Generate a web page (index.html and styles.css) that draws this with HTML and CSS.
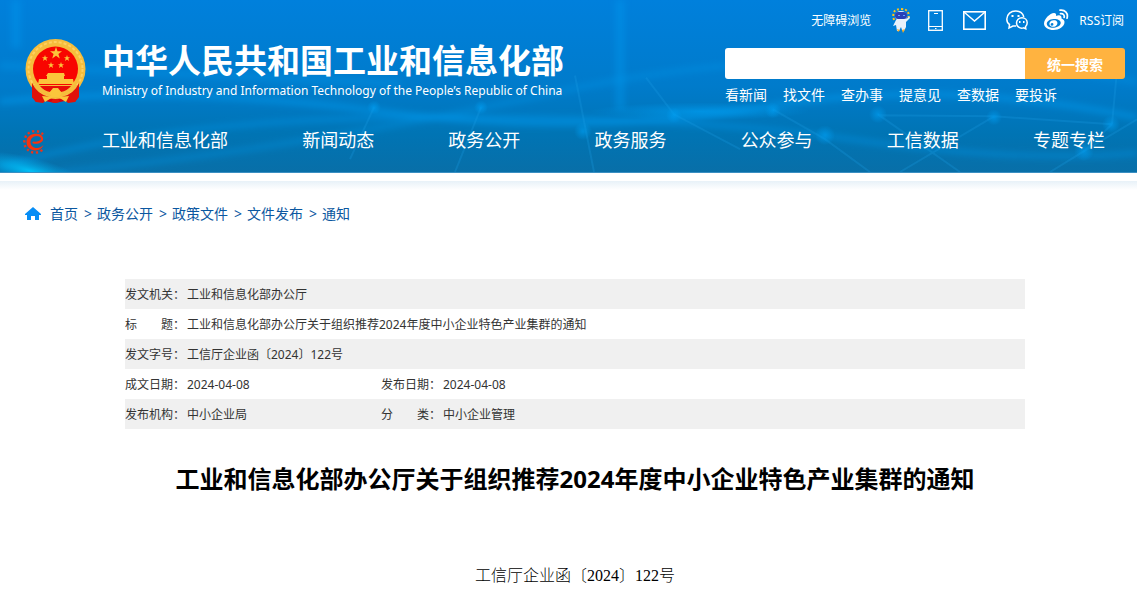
FILE: index.html
```html
<!DOCTYPE html>
<html lang="zh-CN">
<head>
    <meta charset="UTF-8">
    <meta name="viewport" content="width=device-width, initial-scale=1.0">
    <title>工业和信息化部办公厅关于组织推荐2024年度中小企业特色产业集群的通知</title>
    <link rel="stylesheet" href="styles.css">
</head>
<body>
    <header class="header">
        <svg class="header-bg" viewBox="0 0 1137 173" preserveAspectRatio="none" aria-hidden="true">
            <defs>
                <radialGradient id="glow">
                    <stop offset="0" stop-color="#00a0f4" stop-opacity=".6"/>
                    <stop offset="1" stop-color="#00a0f4" stop-opacity="0"/>
                </radialGradient>
                <radialGradient id="cyan">
                    <stop offset="0" stop-color="#00c8ff" stop-opacity=".9"/>
                    <stop offset="1" stop-color="#00b0f5" stop-opacity="0"/>
                </radialGradient>
                <filter id="soft" x="-10%" y="-30%" width="120%" height="160%"><feGaussianBlur stdDeviation="3"/></filter>
            </defs>
            <g fill="none" stroke="#009cf0" filter="url(#soft)">
                <path stroke-opacity=".5" stroke-width="6" d="M0 102 Q180 86 380 112 T760 108 T1137 118"/>
                <path stroke-opacity=".4" stroke-width="5" d="M0 168 Q160 120 420 118 T850 140 T1137 154"/>
                <path stroke-opacity=".3" stroke-width="6" d="M60 173 Q300 150 560 92 T1137 82"/>
                <path stroke-opacity=".35" stroke-width="10" d="M620 0V110M16 0V48"/>
                <path stroke-opacity=".3" stroke-width="8" d="M0 66 Q220 76 400 84"/>
            </g>
            <g fill="none" stroke="#1a9ee6" stroke-opacity=".25" stroke-width="2">
                <path d="M374 108L350 160M481 108L455 173M575 76L594 173M646 78L674 115 740 150M773 110L825 140 870 173M878 115L960 173M1112 125L994 117 880 116M1112 125L1084 152 1050 173M1112 125L1118 60M1084 152L1137 120M900 173L994 117"/>
            </g>
            <ellipse cx="30" cy="172" rx="60" ry="14" fill="url(#cyan)" transform="rotate(14 30 172)"/>
            <g fill="url(#glow)">
                <circle cx="374" cy="108" r="7"/>
                <circle cx="481" cy="108" r="7"/>
                <circle cx="583" cy="132" r="9"/>
                <circle cx="674" cy="116" r="8"/>
                <circle cx="773" cy="111" r="8"/>
                <circle cx="878" cy="115" r="9"/>
                <circle cx="994" cy="118" r="8"/>
                <circle cx="1111" cy="125" r="9"/>
                <circle cx="1084" cy="152" r="10"/>
                <circle cx="825" cy="136" r="10"/>
                <ellipse cx="700" cy="112" rx="110" ry="9"/>
            </g>
        </svg>
        <div class="header-inner">
            <div class="top">
                <a class="brand" href="#">
                    <svg class="emblem" viewBox="0 0 61 64" role="img" aria-label="国徽">
                        <path fill="#d8000c" d="M8 44L53 44 53 58 50 63 40 62 30 64 20 62 11 63 7 58z"/>
                        <circle cx="30.500" cy="30" r="30" fill="#f6bd3c"/>
                        <circle cx="30.500" cy="30" r="27" fill="none" stroke="#ffd060" stroke-width="2" stroke-dasharray="3 2"/>
                        <circle cx="30.500" cy="30" r="22.500" fill="#f80500"/>
                        <g fill="#fbc53b">
                            <path d="M31 8l1.500 4.300h4.500l-3.600 2.700 1.400 4.500-3.800-2.700-3.800 2.700 1.400-4.500-3.600-2.700h4.500z"/>
                            <path id="star" d="M20 16l.8 2.200h2.300l-1.800 1.400.7 2.300-2-1.400-2 1.400.7-2.300-1.800-1.400h2.300z"/>
                            <use href="#star" x="22"/>
                            <use href="#star" x="6" y="7"/>
                            <use href="#star" x="16" y="7"/>
                            <path d="M23 34h16l1 3h-1v3h9l1 5H13l1-5h8v-3h-1z"/>
                        </g>
                        <path fill="#f6bd3c" d="M8 46h45l-5 6q-6 4-10 5-7 2-15 0-10-3-15-11z"/>
                        <path fill="#e80d08" d="M15 47h31q-4 5-10 6l-3-4h-5l-3 4q-6-1-10-6z"/>
                        <path fill="#e0120a" d="M7 44q5 11 17 14l-6 6-7-1-4-5zM54 44q-5 11-17 14l6 6 7-1 4-5z"/>
                        <path fill="#fbc53b" d="M17 57l11 1-8 5zM44 57l-11 1 8 5zM24 54l4-4h5l4 4-3 4h-7z"/>
                        <path fill="#e0120a" d="M26 63l2-3h5l2 3-5 1z"/>
                    </svg>
                    <span class="brand-text">
                        <span class="brand-cn">中华人民共和国工业和信息化部</span>
                        <span class="brand-en" lang="en">Ministry of Industry and Information Technology of the People’s Republic of China</span>
                    </span>
                </a>
                <div class="tools">
                    <div class="tool-links">
                        <a class="barrier" href="#">无障碍浏览</a>
                        <a class="robot" href="#" aria-label="智能问答">
                            <svg width="18" height="26" viewBox="0 0 18 26">
                                <path fill="none" stroke="#ffc21c" stroke-width="2" stroke-dasharray="2 2" d="M2 13Q-1 2 9 2 19 2 16 13"/>
                                <path fill="#e8f1fb" d="M5 12h8l3-1 1-2 1 2-4 4v5l-2 4-2-1-1-3-2 4H5l-1-6-3 1 3-6z"/>
                                <ellipse cx="9" cy="9" rx="6" ry="5" fill="#e8f1fb"/>
                                <rect x="3" y="5" width="12" height="7" rx="3" fill="#2840b8"/>
                                <path fill="#63a6ff" d="M6 8h2v1H6zM11 8h2v1h-2z"/>
                                <path fill="#ffae21" d="M5 22l3 1-2 2zM10 23l3-1-2 4z"/>
                            </svg>
                        </a>
                        <a class="phone" href="#" aria-label="手机版">
                            <svg width="15" height="21" viewBox="0 0 15 21" fill="none" stroke="#fff">
                                <rect x="0.700" y="0.700" width="13.600" height="19.600" stroke-width="1.300"/>
                                <path d="M1 16.500h13M6 3.500h4M7 18.500h1.500"/>
                            </svg>
                        </a>
                        <a class="mail" href="#" aria-label="邮箱">
                            <svg width="23" height="19" viewBox="0 0 23 19" fill="none" stroke="#fff">
                                <rect x="0.800" y="0.800" width="21.400" height="17.400" stroke-width="1.600"/>
                                <path stroke-width="1.400" d="M1 1l10.500 9L22 1"/>
                            </svg>
                        </a>
                        <a class="wechat" href="#" aria-label="微信">
                            <svg width="22" height="20" viewBox="0 0 22 20" fill="none" stroke="#fff" stroke-width="1.500">
                                <path d="M10 16l-3 0-4 2 .5-3.500C1 13 .8 11 .8 9 1 4 5 1 9.500 1c4.500 0 7.500 2.500 8.300 6"/>
                                <path d="M16 7.800c3 0 5.200 2.200 5.200 5 0 1.700-.7 3-1.700 4l.3 2-2.300-.9c-3.500 1-7-1.300-7-5 0-2.800 2.400-5.100 5.500-5.100z"/>
                                <path stroke-width="2" d="M5.500 6h2M11.500 6h2M13 12h1.500M17 12h1.500"/>
                            </svg>
                        </a>
                        <a class="weibo" href="#" aria-label="微博">
                            <svg width="26" height="22" viewBox="0 0 26 22">
                                <path fill="#fff" fill-rule="evenodd" d="M1 14.500C1 10 7 4 11 4c2 0 2.500 1.500 2 3 3-1.200 6-1 5.500 2.500 2 .7 3 2 3 3.500 0 4.500-5.500 8-11 8C5.500 21 1 18.500 1 14.500zM10.500 10C6.500 10.300 3.500 12.500 3.800 15c.2 2.500 3.200 4 7.200 3.700 4-.4 7-2.700 6.700-5.200-.3-2.500-3.500-3.800-7.200-3.500z"/>
                                <path fill="#fff" fill-rule="evenodd" d="M10.500 11.200c3-.3 4.500 1.800 3.700 4-.7 2-3.200 3-5.200 2.500-2.400-.7-3.200-2.800-2.200-4.500.7-1.200 2-1.900 3.700-2zM9 14a1.400 1.400 0 1 0 .1 2.800A1.400 1.400 0 0 0 9 14z"/>
                                <path fill="none" stroke="#fff" stroke-width="1.700" stroke-linecap="round" d="M17 1.200c5-.8 8.500 3.300 7 8M17.500 4.600c2.500-.4 4.300 1.500 3.600 3.900"/>
                            </svg>
                        </a>
                        <a href="#">RSS订阅</a>
                    </div>
                    <form class="search">
                        <input class="search-input" type="text" aria-label="搜索">
                        <button class="search-btn" type="button">统一搜索</button>
                    </form>
                    <div class="quick">
                        <a href="#">看新闻</a>
                        <a href="#">找文件</a>
                        <a href="#">查办事</a>
                        <a href="#">提意见</a>
                        <a href="#">查数据</a>
                        <a href="#">要投诉</a>
                    </div>
                </div>
            </div>
            <nav class="nav">
                <a class="nav-logo" href="#" aria-label="首页">
                    <svg width="28" height="26" viewBox="0 0 28 26">
                        <path fill="none" stroke="#e8351c" stroke-width="2.400" stroke-dasharray="2.200 2.600" d="M20 5.500A10.800 10.800 0 1 0 21 19"/>
                        <path fill="none" stroke="#f5330f" stroke-width="2.200" stroke-linecap="round" d="M10.500 13.500c3 .8 9-.5 8.500-3.800C18.500 7 15.500 5.800 12.500 6"/>
                        <path fill="#f5330f" d="M14 5C8 4 3.500 8 3.500 13c0 5 4 8.700 9 8.500 4-.2 7-2.500 8-5.500-2 2-4 3-6.500 3-4 0-6.500-2.500-6.500-6 0-3 2-5.800 6.500-6z"/>
                        <path fill="#1565b0" d="M20 12q5-1 7-6 .5 6-7 6z"/>
                    </svg>
                </a>
                <div class="nav-list">
                    <a href="#">工业和信息化部</a>
                    <a href="#">新闻动态</a>
                    <a href="#">政务公开</a>
                    <a href="#">政务服务</a>
                    <a href="#">公众参与</a>
                    <a href="#">工信数据</a>
                    <a href="#">专题专栏</a>
                </div>
            </nav>
        </div>
    </header>
    <main class="main">
        <div class="crumbs">
            <svg class="home" width="16" height="14" viewBox="0 0 16 14" aria-hidden="true">
                <path fill="#078df5" d="M8 0l8 7v1h-2v5h-4V9H6v4H2V8H0V7z"/>
            </svg>
            <a href="#">首页</a>
            <span>&gt;</span>
            <a href="#">政务公开</a>
            <span>&gt;</span>
            <a href="#">政策文件</a>
            <span>&gt;</span>
            <a href="#">文件发布</a>
            <span>&gt;</span>
            <a href="#">通知</a>
        </div>
        <article class="article">
            <table class="info">
                <tr>
                    <th>发文机关：</th>
                    <td colspan="3">工业和信息化部办公厅</td>
                </tr>
                <tr>
                    <th>标　　题：</th>
                    <td colspan="3">工业和信息化部办公厅关于组织推荐2024年度中小企业特色产业集群的通知</td>
                </tr>
                <tr>
                    <th>发文字号：</th>
                    <td colspan="3">工信厅企业函〔2024〕122号</td>
                </tr>
                <tr>
                    <th class="label">成文日期：</th>
                    <td class="value">2024-04-08</td>
                    <th class="label">发布日期：</th>
                    <td>2024-04-08</td>
                </tr>
                <tr>
                    <th>发布机构：</th>
                    <td>中小企业局</td>
                    <th>分　　类：</th>
                    <td>中小企业管理</td>
                </tr>
            </table>
            <h1>工业和信息化部办公厅关于组织推荐2024年度中小企业特色产业集群的通知</h1>
            <p class="doc-no">工信厅企业函〔2024〕122号</p>
        </article>
    </main>
</body>
</html>
```
FILE: styles.css
```css
*{
    margin:0;
    padding:0;
    box-sizing:border-box;
}
body{
    background:#fff;
    color:#333;
    font-size:12px;
    font-family:"Noto Sans", "Noto Sans CJK SC", sans-serif;
}
a{
    color:inherit;
    text-decoration:none;
}
svg{
    display:block;
}
.header{
    position:relative;
    background:linear-gradient(#0080dc, #007bcb 50%, #0074b4 78%, #086fa8);
    border-bottom:1px solid #3a8fc2;
    color:#fff;
}
.header-bg{
    position:absolute;
    top:0;
    left:0;
    width:100%;
    height:100%;
}
.header-inner{
    position:relative;
    padding:0 12px 0 25px;
}
.top{
    display:flex;
    justify-content:space-between;
}
.brand{
    display:flex;
    align-items:flex-start;
    padding-top:39px;
}
.emblem{
    width:61px;
    height:64px;
}
.brand-text{
    margin-left:16px;
    white-space:nowrap;
}
.brand-cn{
    display:block;
    font-size:33px;
    line-height:44px;
    font-weight:bold;
}
.brand-en{
    display:block;
    font-size:12px;
    line-height:16px;
}
.tools{
    width:400px;
}
.tool-links{
    display:flex;
    justify-content:flex-end;
    align-items:center;
    height:40px;
    margin-bottom:8px;
    padding-right:1px;
}
.barrier{
    margin-right:21px;
}
.robot{
    margin-right:18px;
}
.phone{
    margin-right:20px;
}
.mail{
    margin-right:20px;
}
.wechat{
    margin-right:15px;
}
.weibo{
    margin-right:10px;
}
.search{
    display:flex;
    height:31px;
}
.search-input{
    flex:1;
    min-width:0;
    padding:0 10px;
    border:none;
    border-radius:3px 0 0 3px;
    background:#fff;
}
.search-btn{
    width:100px;
    border:none;
    border-radius:0 3px 3px 0;
    background:#ffb340;
    color:#fff;
    font-family:inherit;
    font-size:14px;
    font-weight:bold;
}
.quick{
    display:flex;
    gap:16px;
    font-size:14px;
    line-height:32px;
}
.nav{
    display:flex;
    align-items:center;
    height:61px;
}
.nav-logo{
    margin-left:-2px;
}
.nav-list{
    display:flex;
    flex:1;
    justify-content:space-between;
    padding:0 20px 4px 51px;
    font-size:18px;
    line-height:30px;
}
.main{
    margin-top:8px;
    padding:0 12px 0 25px;
    background:linear-gradient(#e8f1f8, #fff 9px);
}
.crumbs{
    display:flex;
    align-items:center;
    padding-top:21px;
    color:#0b57a0;
    font-size:14px;
    line-height:24px;
}
.crumbs span{
    margin:0 5px 0 6px;
}
.home{
    margin-right:9px;
}
.article{
    max-width:900px;
    margin:53px auto 0;
}
.info{
    width:100%;
    border-collapse:collapse;
}
.info tr:nth-child(odd){
    background:#f0f0f0;
}
.info th, .info td{
    height:30px;
    font-weight:normal;
    text-align:left;
    white-space:nowrap;
}
.info .label{
    width:62px;
}
.info .value{
    width:194px;
}
h1{
    margin-top:32px;
    color:#000;
    font-size:24px;
    line-height:36px;
    text-align:center;
}
.doc-no{
    margin-top:65px;
    color:#000;
    font-family:"Liberation Serif", "Noto Sans CJK SC", serif;
    font-size:16px;
    font-weight:300;
    line-height:28px;
    text-align:center;
}
```
